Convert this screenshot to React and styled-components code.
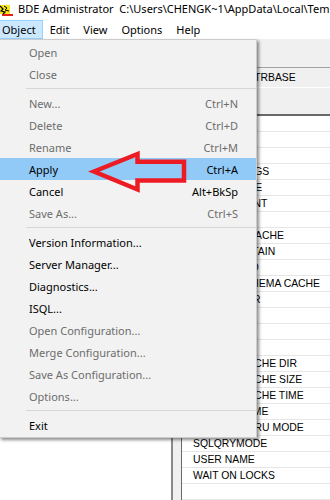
import React from "react"
import styled, { createGlobalStyle } from "styled-components"

const GlobalStyle = createGlobalStyle`
  html, body {
    margin: 0;
    padding: 0;
    background: #fff;
    overflow: hidden;
  }
`

const Window = styled.div`
  position: relative;
  width: 330px;
  height: 500px;
  display: flex;
  flex-direction: column;
  overflow: hidden;
  background: #fff;
  font-family: "Segoe UI", "Noto Sans", sans-serif;
  font-size: 11px;
  color: #000;
`

const TitleBar = styled.div`
  height: 20px;
  display: flex;
  align-items: center;
  gap: 4px;
  white-space: nowrap;

  svg {
    flex-shrink: 0;
  }
`

const TitleText = styled.span`
  line-height: 20px;
  margin-top: -1px;
`

const MenuBar = styled.div`
  height: 20px;
  display: flex;
  margin-left: -5px;
`

const MenuTitle = styled.div`
  height: 19px;
  padding: 0 6px;
  display: flex;
  align-items: center;
  box-sizing: border-box;
  border: 1px solid ${(p) => (p.$open ? "#99d1ff" : "transparent")};
  background: ${(p) => (p.$open ? "#cce8ff" : "transparent")};
`

const Workspace = styled.div`
  position: relative;
  flex: 1;
  display: flex;
`

const TreePane = styled.div`
  width: 171px;
  background: #fff;
`

const Splitter = styled.div`
  width: 8px;
  background: #f0f0f0;
  border-left: 2px solid #8a8a8a;
  border-right: 1px solid #696969;
`

const DetailPane = styled.div`
  flex: 1;
  display: flex;
  flex-direction: column;
  font-family: "Liberation Sans", Arial, sans-serif;
  font-size: 10.4px;
  white-space: nowrap;
`

const TabArea = styled.div`
  height: 28px;
  background: #f0f0f0;
  border-bottom: 1px solid #a0a0a0;
`

const CaptionRow = styled.div`
  height: 19px;
  line-height: 19px;
  padding-left: 4px;
  background: #f0f0f0;
  border-bottom: 1px solid #fff;
`

const GrayGap = styled.div`
  height: 26px;
  background: #f0f0f0;
  border-bottom: 2px solid #696969;
`

const ParamRow = styled.div`
  height: 15px;
  line-height: 16px;
  padding-left: 11px;
  border-bottom: 1px solid #e6e6e6;
`

const DropMenu = styled.div`
  position: absolute;
  top: 0;
  left: -1px;
  width: 256px;
  padding: 1px 0;
  background: #f2f2f2;
  border: 1px solid #cccccc;
  box-shadow: 2px 2px 3px rgba(0, 0, 0, 0.45);
`

const Item = styled.div`
  height: 22px;
  display: flex;
  align-items: center;
  justify-content: space-between;
  padding: 0 18px 0 29px;
  color: ${(p) => (p.$disabled ? "#6d6d6d" : "#000")};
  background: ${(p) => (p.$active ? "#91c9f7" : "transparent")};
`

const Separator = styled.div`
  height: 7px;
  display: flex;
  align-items: center;
  padding-left: 26px;

  &::after {
    content: "";
    flex: 1;
    height: 1px;
    background: #d7d7d7;
  }
`

const Arrow = styled.svg`
  position: absolute;
  left: 80px;
  top: 145px;
  width: 112px;
  height: 55px;
`

const AppIcon = () => (
  <svg width="14" height="16" viewBox="0 0 14 16">
    <rect x="0" y="3" width="10" height="9" fill="#f5e51a" />
    <path d="M0 4 L3 7 L1 9 L5 10 L3 12" stroke="#000" strokeWidth="1.2" fill="none" />
    <path d="M4 4 L7 6 L5 8 L9 9" stroke="#000" strokeWidth="1" fill="none" />
    <rect x="2" y="12" width="11" height="2" fill="#e0201b" />
  </svg>
)

const menuItems = [
  { label: "Open", disabled: true },
  { label: "Close", disabled: true },
  { sep: true },
  { label: "New...", key: "Ctrl+N", disabled: true },
  { label: "Delete", key: "Ctrl+D", disabled: true },
  { label: "Rename", key: "Ctrl+M", disabled: true },
  { label: "Apply", key: "Ctrl+A", active: true },
  { label: "Cancel", key: "Alt+BkSp" },
  { label: "Save As...", key: "Ctrl+S", disabled: true },
  { sep: true },
  { label: "Version Information..." },
  { label: "Server Manager..." },
  { label: "Diagnostics..." },
  { label: "ISQL..." },
  { label: "Open Configuration...", disabled: true },
  { label: "Merge Configuration...", disabled: true },
  { label: "Save As Configuration...", disabled: true },
  { label: "Options...", disabled: true },
  { sep: true },
  { label: "Exit" },
]

const params = [
  "VERSION", "TYPE", "DLL32", "DRIVER FLAGS", "TRACE MODE", "BATCH COUNT",
  "BLOB SIZE", "BLOBS TO CACHE", "COMMIT RETAIN", "ENABLE BCD",
  "ENABLE SCHEMA CACHE", "LANGDRIVER", "MAX ROWS", "OPEN MODE", "ROLE NAME",
  "SCHEMA CACHE DIR", "SCHEMA CACHE SIZE", "SCHEMA CACHE TIME", "SERVER NAME",
  "SQLPASSTHRU MODE", "SQLQRYMODE", "USER NAME", "WAIT ON LOCKS", "",
]

const App = () => (
  <Window>
    <GlobalStyle />
    <TitleBar>
      <AppIcon />
      <TitleText>BDE Administrator&nbsp; C:\Users\CHENGK~1\AppData\Local\Temp</TitleText>
    </TitleBar>
    <MenuBar>
      <MenuTitle $open>Object</MenuTitle>
      <MenuTitle>Edit</MenuTitle>
      <MenuTitle>View</MenuTitle>
      <MenuTitle>Options</MenuTitle>
      <MenuTitle>Help</MenuTitle>
    </MenuBar>
    <Workspace>
      <TreePane />
      <Splitter />
      <DetailPane>
        <TabArea />
        <CaptionRow>Definition of INTRBASE</CaptionRow>
        <GrayGap />
        {params.map((name, i) => (
          <ParamRow key={i}>{name}</ParamRow>
        ))}
      </DetailPane>
      <DropMenu>
        {menuItems.map((it, i) =>
          it.sep ? (
            <Separator key={i} />
          ) : (
            <Item key={i} $disabled={it.disabled} $active={it.active}>
              <span>{it.label}</span>
              {it.key && <span>{it.key}</span>}
            </Item>
          )
        )}
      </DropMenu>
    </Workspace>
    <Arrow viewBox="80 145 112 55">
      <polygon
        points="94,171.5 137.5,154 137.5,161.7 184,161.7 184,180.5 137.5,180.5 137.5,189.5"
        fill="none"
        stroke="#ed1c24"
        strokeWidth="4.5"
      />
    </Arrow>
  </Window>
)

export default App
